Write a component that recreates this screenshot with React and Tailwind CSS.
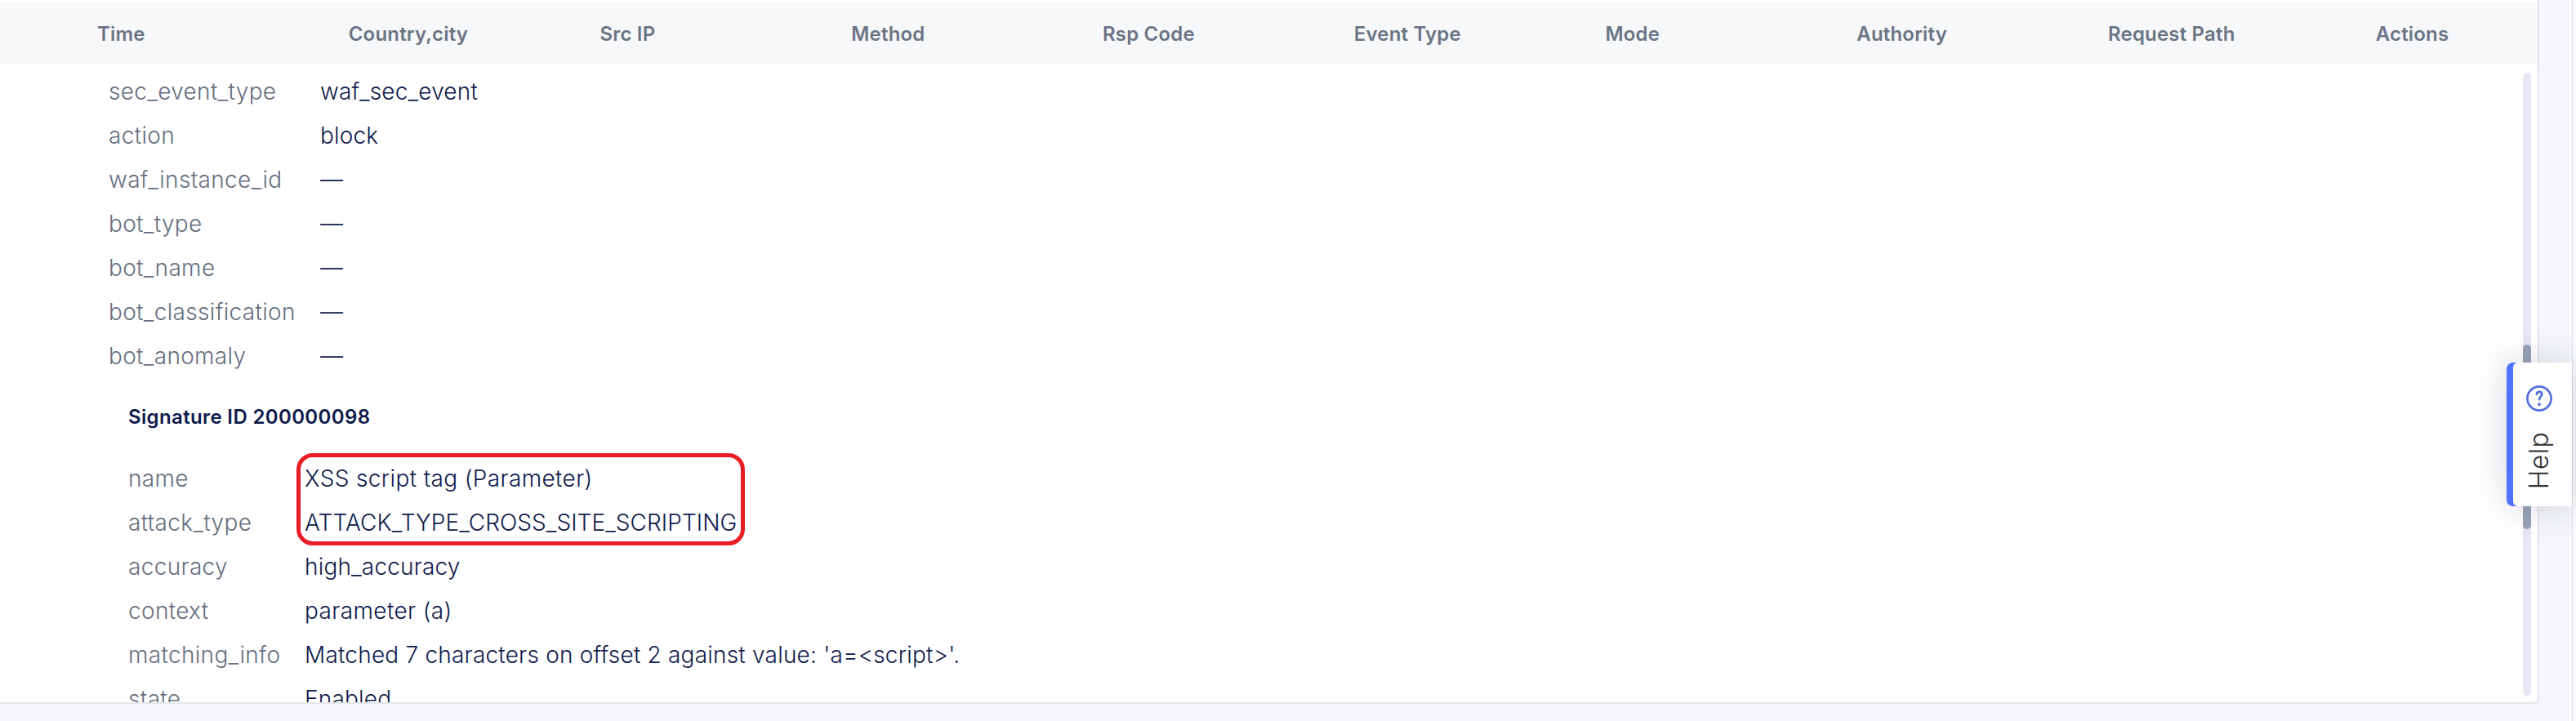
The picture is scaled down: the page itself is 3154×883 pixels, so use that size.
const columns = ['Time', 'Country,city', 'Src IP', 'Method', 'Rsp Code', 'Event Type', 'Mode', 'Authority', 'Request Path'];

const eventFields = [
  ['sec_event_type', 'waf_sec_event', 'tracking-[0.18px]'],
  ['action', 'block', 'tracking-[0.18px]'],
  ['waf_instance_id', '—', ''],
  ['bot_type', '—', ''],
  ['bot_name', '—', ''],
  ['bot_classification', '—', ''],
  ['bot_anomaly', '—', ''],
];

const signatureFields = [
  ['name', 'XSS script tag (Parameter)', 'tracking-[0.36px]'],
  ['attack_type', 'ATTACK_TYPE_CROSS_SITE_SCRIPTING', 'tracking-[0.07px]'],
  ['accuracy', 'high_accuracy', 'tracking-[0.18px]'],
  ['context', 'parameter (a)', 'tracking-[0.38px]'],
  ['matching_info', "Matched 7 characters on offset 2 against value: 'a=<script>'.", 'tracking-[0.21px]'],
  ['state', 'Enabled', 'tracking-[0.18px]'],
];

function Field({ name, value, width, tracking }) {
  return (
    <div className="flex h-[54px] items-center whitespace-nowrap text-[28px] leading-[54px] font-light">
      <dt className={`${width} shrink-0 tracking-[0.33px] text-[#667080]`}>{name}</dt>
      <dd className={`${tracking} text-[#0f1b4c]`}>{value}</dd>
    </div>
  );
}

function HelpTab() {
  return (
    <div className="absolute top-[444px] left-[3069px] flex h-[176px] w-[80px] flex-col items-center rounded-l-[8px] bg-[#4f73ff] pl-[8px] shadow-[0_0_40px_rgba(60,70,100,0.22)]">
      <div className="flex h-full w-full flex-col items-center rounded-l-[6px] bg-white pt-[28px] pr-[8px]">
        <svg className="h-[32px] w-[32px] shrink-0" viewBox="0 0 32 32" fill="none" stroke="#5570dc" strokeWidth="2.7" strokeLinecap="round">
          <circle cx="16" cy="16" r="14.6" />
          <path d="M12.9 10.8C13 8.8 14.4 7.8 16.1 7.8c1.9 0 3.2 1.2 3.2 2.9 0 1.5-.9 2.2-1.8 3.2-.8.8-1.2 1.5-1.3 3.3" />
          <circle cx="16" cy="23.2" r="1.9" fill="#5570dc" stroke="none" />
        </svg>
        <span className="mt-[25px] rotate-180 text-[32px] leading-[40px] font-light tracking-[0.3px] text-[#333] [writing-mode:vertical-rl]">Help</span>
      </div>
    </div>
  );
}

export default function App() {
  return (
    <div className="relative flex h-[883px] w-[3154px] overflow-hidden bg-[#f9fafb] font-['Inter',sans-serif]">
      <div className="h-full w-[3150px] shrink-0 border-r border-[#dfe1e8] bg-[#f5f7fa]">
        <main className="flex h-[862px] w-[3109px] flex-col rounded-br-[6px] border-r-2 border-b-2 border-[#e5e6eb] bg-white pt-[3px]">
          <header className="flex h-[76px] shrink-0 items-center bg-[#f6f8fa] pt-[2px] pl-[119px] text-[24px] font-semibold tracking-[0.18px] whitespace-nowrap text-[#6b7585]">
            {columns.map((c) => (
              <div key={c} className="w-[307.75px] shrink-0">{c}</div>
            ))}
            <div className="pl-[20px]">Actions</div>
          </header>
          <div className="flex min-h-0 flex-1 justify-between overflow-hidden">
            <div className="pt-[6px] pl-[132px]">
              <dl className="pl-px">
                {eventFields.map(([n, v, t]) => (
                  <Field key={n} name={n} value={v} tracking={t} width="w-[259px]" />
                ))}
              </dl>
              <section className="pl-[25px]">
                <h2 className="flex h-[96px] items-center text-[24px] font-semibold tracking-[0.36px] text-[#0f1b4c]">Signature ID 200000098</h2>
                <dl className="relative">
                  {signatureFields.map(([n, v, t]) => (
                    <Field key={n} name={n} value={v} tracking={t} width="w-[216px]" />
                  ))}
                  <div className="absolute top-[-4px] left-[206px] h-[113px] w-[549px] rounded-[20px] border-[5px] border-[#e91d25]" />
                </dl>
              </section>
            </div>
            <div className="mt-[10px] mr-[8px] h-[763px] w-[10px] shrink-0 rounded-full bg-[#e6e7f3] pt-[333px]">
              <div className="h-[226px] rounded-full bg-[#99a1b5]" />
            </div>
          </div>
        </main>
      </div>
      <HelpTab />
    </div>
  );
}
